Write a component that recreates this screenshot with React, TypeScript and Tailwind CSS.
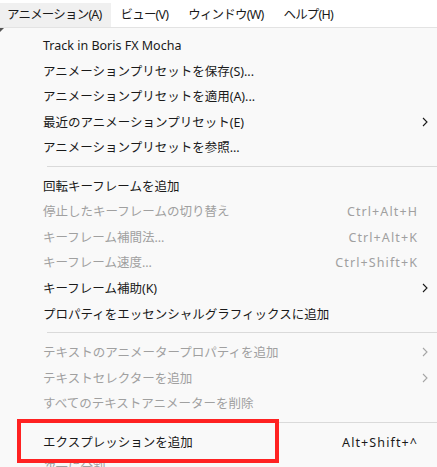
import React from "react";

type Item =
  | { kind: "sep" }
  | { kind: "item"; label: string; shortcut?: string; sub?: boolean; disabled?: boolean };

const items: Item[] = [
  { kind: "item", label: "Track in Boris FX Mocha" },
  { kind: "item", label: "アニメーションプリセットを保存(S)..." },
  { kind: "item", label: "アニメーションプリセットを適用(A)..." },
  { kind: "item", label: "最近のアニメーションプリセット(E)", sub: true },
  { kind: "item", label: "アニメーションプリセットを参照..." },
  { kind: "sep" },
  { kind: "item", label: "回転キーフレームを追加" },
  { kind: "item", label: "停止したキーフレームの切り替え", shortcut: "Ctrl+Alt+H", disabled: true },
  { kind: "item", label: "キーフレーム補間法...", shortcut: "Ctrl+Alt+K", disabled: true },
  { kind: "item", label: "キーフレーム速度...", shortcut: "Ctrl+Shift+K", disabled: true },
  { kind: "item", label: "キーフレーム補助(K)", sub: true },
  { kind: "item", label: "プロパティをエッセンシャルグラフィックスに追加" },
  { kind: "sep" },
  { kind: "item", label: "テキストのアニメータープロパティを追加", sub: true, disabled: true },
  { kind: "item", label: "テキストセレクターを追加", sub: true, disabled: true },
  { kind: "item", label: "すべてのテキストアニメーターを削除", disabled: true },
  { kind: "sep" },
  { kind: "item", label: "エクスプレッションを追加", shortcut: "Alt+Shift+^" },
  { kind: "item", label: "次元に分割", disabled: true },
];

function Chevron({ disabled }: { disabled?: boolean }) {
  return (
    <svg width="6" height="10" viewBox="0 0 6 10" className="absolute right-[9px] top-1/2 -translate-y-1/2">
      <path d="M1 1 L5 5 L1 9" fill="none" stroke={disabled ? "#a6a6a6" : "#1a1a1a"} strokeWidth="1.1" />
    </svg>
  );
}

export default function App() {
  return (
    <div
      className="relative w-[437px] h-[467px] overflow-hidden bg-[#f9f9f9] text-[12.5px]"
      style={{ fontFamily: '"Noto Sans", "Noto Sans CJK JP", sans-serif' }}
    >
      <div className="flex h-[28px] items-end bg-white border-b border-[#e3e3e3] tracking-[-0.8px] text-[#1a1a1a]">
        <div className="flex h-[24px] items-center bg-[#f0f0f0] pl-[7px] pr-[9px]">アニメーション(A)</div>
        <div className="flex h-[24px] items-center px-[10px]">ビュー(V)</div>
        <div className="flex h-[24px] items-center px-[10px]">ウィンドウ(W)</div>
        <div className="flex h-[24px] items-center px-[10px]">ヘルプ(H)</div>
      </div>
      <div className="absolute left-0 top-[28px] w-0 h-0 border-t-[4px] border-r-[4px] border-t-[#555] border-r-transparent" />
      <div className="flex flex-col pt-[4px]">
        {items.map((it, i) =>
          it.kind === "sep" ? (
            <div key={i} className="h-[12.8px] flex items-center pl-[47px]">
              <div className="h-px w-full bg-[#dadada]" />
            </div>
          ) : (
            <div
              key={i}
              className={`relative flex h-[25.6px] shrink-0 items-center pl-[43px] pr-[20px] pt-[3px] ${
                it.disabled ? "text-[#a0a0a0]" : "text-[#1a1a1a]"
              }`}
            >
              <span className="whitespace-nowrap">{it.label}</span>
              {it.shortcut && (
                <span className="ml-auto whitespace-nowrap tracking-[1.1px] mr-[-1px]">{it.shortcut}</span>
              )}
              {it.sub && <Chevron disabled={it.disabled} />}
            </div>
          )
        )}
      </div>
      <div className="absolute left-[17px] top-[419px] w-[262px] h-[44px] border-[4px] border-[#ff2222]" />
    </div>
  );
}
